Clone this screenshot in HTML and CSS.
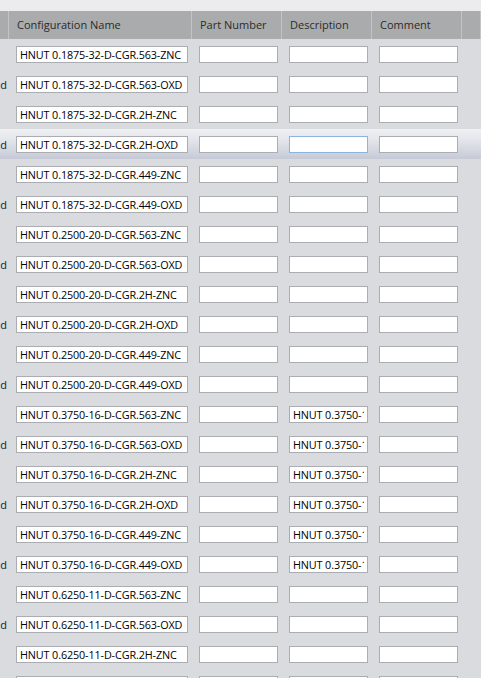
FILE: index.html
```html
<!DOCTYPE html>
<html lang="en">
<head>
  <meta charset="UTF-8" />
  <title>Configurations</title>
  <link rel="stylesheet" href="styles.css">
</head>
<body>
  <div class="toolbar"></div>

  <div class="grid">
    <div class="row head">
      <div class="cell c0"></div>
      <div class="cell c1">Configuration Name</div>
      <div class="cell c2">Part Number</div>
      <div class="cell c2">Description</div>
      <div class="cell c2">Comment</div>
      <div class="cell c5"></div>
    </div>

    <div class="row"><div class="cell c0"></div><div class="cell c1"><input class="wide" value="HNUT 0.1875-32-D-CGR.563-ZNC"></div><div class="cell c2"><input></div><div class="cell c2"><input></div><div class="cell c2"><input></div><div class="cell c5"></div></div>
    <div class="row"><div class="cell c0">d</div><div class="cell c1"><input class="wide" value="HNUT 0.1875-32-D-CGR.563-OXD"></div><div class="cell c2"><input></div><div class="cell c2"><input></div><div class="cell c2"><input></div><div class="cell c5"></div></div>
    <div class="row"><div class="cell c0"></div><div class="cell c1"><input class="wide" value="HNUT 0.1875-32-D-CGR.2H-ZNC"></div><div class="cell c2"><input></div><div class="cell c2"><input></div><div class="cell c2"><input></div><div class="cell c5"></div></div>
    <div class="row hover"><div class="cell c0">d</div><div class="cell c1"><input class="wide" value="HNUT 0.1875-32-D-CGR.2H-OXD"></div><div class="cell c2"><input></div><div class="cell c2"><input class="focus"></div><div class="cell c2"><input></div><div class="cell c5"></div></div>
    <div class="row"><div class="cell c0"></div><div class="cell c1"><input class="wide" value="HNUT 0.1875-32-D-CGR.449-ZNC"></div><div class="cell c2"><input></div><div class="cell c2"><input></div><div class="cell c2"><input></div><div class="cell c5"></div></div>
    <div class="row"><div class="cell c0">d</div><div class="cell c1"><input class="wide" value="HNUT 0.1875-32-D-CGR.449-OXD"></div><div class="cell c2"><input></div><div class="cell c2"><input></div><div class="cell c2"><input></div><div class="cell c5"></div></div>

    <div class="row"><div class="cell c0"></div><div class="cell c1"><input class="wide" value="HNUT 0.2500-20-D-CGR.563-ZNC"></div><div class="cell c2"><input></div><div class="cell c2"><input></div><div class="cell c2"><input></div><div class="cell c5"></div></div>
    <div class="row"><div class="cell c0">d</div><div class="cell c1"><input class="wide" value="HNUT 0.2500-20-D-CGR.563-OXD"></div><div class="cell c2"><input></div><div class="cell c2"><input></div><div class="cell c2"><input></div><div class="cell c5"></div></div>
    <div class="row"><div class="cell c0"></div><div class="cell c1"><input class="wide" value="HNUT 0.2500-20-D-CGR.2H-ZNC"></div><div class="cell c2"><input></div><div class="cell c2"><input></div><div class="cell c2"><input></div><div class="cell c5"></div></div>
    <div class="row"><div class="cell c0">d</div><div class="cell c1"><input class="wide" value="HNUT 0.2500-20-D-CGR.2H-OXD"></div><div class="cell c2"><input></div><div class="cell c2"><input></div><div class="cell c2"><input></div><div class="cell c5"></div></div>
    <div class="row"><div class="cell c0"></div><div class="cell c1"><input class="wide" value="HNUT 0.2500-20-D-CGR.449-ZNC"></div><div class="cell c2"><input></div><div class="cell c2"><input></div><div class="cell c2"><input></div><div class="cell c5"></div></div>
    <div class="row"><div class="cell c0">d</div><div class="cell c1"><input class="wide" value="HNUT 0.2500-20-D-CGR.449-OXD"></div><div class="cell c2"><input></div><div class="cell c2"><input></div><div class="cell c2"><input></div><div class="cell c5"></div></div>

    <div class="row"><div class="cell c0"></div><div class="cell c1"><input class="wide" value="HNUT 0.3750-16-D-CGR.563-ZNC"></div><div class="cell c2"><input></div><div class="cell c2"><input value="HNUT 0.3750-16-D-CGR.563-ZNC"></div><div class="cell c2"><input></div><div class="cell c5"></div></div>
    <div class="row"><div class="cell c0">d</div><div class="cell c1"><input class="wide" value="HNUT 0.3750-16-D-CGR.563-OXD"></div><div class="cell c2"><input></div><div class="cell c2"><input value="HNUT 0.3750-16-D-CGR.563-OXD"></div><div class="cell c2"><input></div><div class="cell c5"></div></div>
    <div class="row"><div class="cell c0"></div><div class="cell c1"><input class="wide" value="HNUT 0.3750-16-D-CGR.2H-ZNC"></div><div class="cell c2"><input></div><div class="cell c2"><input value="HNUT 0.3750-16-D-CGR.2H-ZNC"></div><div class="cell c2"><input></div><div class="cell c5"></div></div>
    <div class="row"><div class="cell c0">d</div><div class="cell c1"><input class="wide" value="HNUT 0.3750-16-D-CGR.2H-OXD"></div><div class="cell c2"><input></div><div class="cell c2"><input value="HNUT 0.3750-16-D-CGR.2H-OXD"></div><div class="cell c2"><input></div><div class="cell c5"></div></div>
    <div class="row"><div class="cell c0"></div><div class="cell c1"><input class="wide" value="HNUT 0.3750-16-D-CGR.449-ZNC"></div><div class="cell c2"><input></div><div class="cell c2"><input value="HNUT 0.3750-16-D-CGR.449-ZNC"></div><div class="cell c2"><input></div><div class="cell c5"></div></div>
    <div class="row"><div class="cell c0">d</div><div class="cell c1"><input class="wide" value="HNUT 0.3750-16-D-CGR.449-OXD"></div><div class="cell c2"><input></div><div class="cell c2"><input value="HNUT 0.3750-16-D-CGR.449-OXD"></div><div class="cell c2"><input></div><div class="cell c5"></div></div>

    <div class="row"><div class="cell c0"></div><div class="cell c1"><input class="wide" value="HNUT 0.6250-11-D-CGR.563-ZNC"></div><div class="cell c2"><input></div><div class="cell c2"><input></div><div class="cell c2"><input></div><div class="cell c5"></div></div>
    <div class="row"><div class="cell c0">d</div><div class="cell c1"><input class="wide" value="HNUT 0.6250-11-D-CGR.563-OXD"></div><div class="cell c2"><input></div><div class="cell c2"><input></div><div class="cell c2"><input></div><div class="cell c5"></div></div>
    <div class="row"><div class="cell c0"></div><div class="cell c1"><input class="wide" value="HNUT 0.6250-11-D-CGR.2H-ZNC"></div><div class="cell c2"><input></div><div class="cell c2"><input></div><div class="cell c2"><input></div><div class="cell c5"></div></div>
    <div class="row"><div class="cell c0"></div><div class="cell c1"><input class="wide"></div><div class="cell c2"><input></div><div class="cell c2"><input></div><div class="cell c2"><input></div><div class="cell c5"></div></div>
  </div>
</body>
</html>
```

FILE: styles.css
```css
html, body {
  margin: 0;
  padding: 0;
  height: 100%;
  overflow: hidden;
}
body {
  font-family: 'Open Sans', 'Noto Sans', sans-serif;
  font-size: 11px;
  color: #000;
  background: #d9dbde;
}
.toolbar {
  height: 11px;
  background: #ececef;
}
.row {
  display: flex;
  height: 30px;
  align-items: center;
}
.head {
  height: 28px;
  background: #a9abad;
  color: #2b2b2b;
}
.head .cell {
  height: 28px;
  line-height: 27px;
  border-right: 1px solid #c2c4c6;
  padding-left: 8px;
  box-sizing: border-box;
}
.head .c0 {
  padding-left: 0;
}
.hover {
  background: linear-gradient(#eff0f3, #e6e8ed 30%, #c6cad6);
}
.cell {
  box-sizing: border-box;
  white-space: nowrap;
  overflow: hidden;
}
.c0 {
  width: 9px;
  padding-right: 2px;
  text-align: right;
  direction: rtl;
  color: #222;
}
.c1 {
  width: 183px;
  padding-left: 7px;
}
.c2 {
  width: 90px;
  padding-left: 7px;
}
.c5 {
  flex: 1;
}
input {
  box-sizing: border-box;
  display: block;
  width: 79px;
  height: 17px;
  margin: 0;
  padding: 0 3px;
  border: 1px solid #abadb3;
  background: #fff;
  font-family: 'Open Sans', 'Noto Sans', sans-serif;
  font-size: 10.8px;
  letter-spacing: -0.12px;
  color: #000;
  outline: none;
}
input.wide {
  width: 172px;
}
input.focus {
  border-color: #8cb4de;
}
```
